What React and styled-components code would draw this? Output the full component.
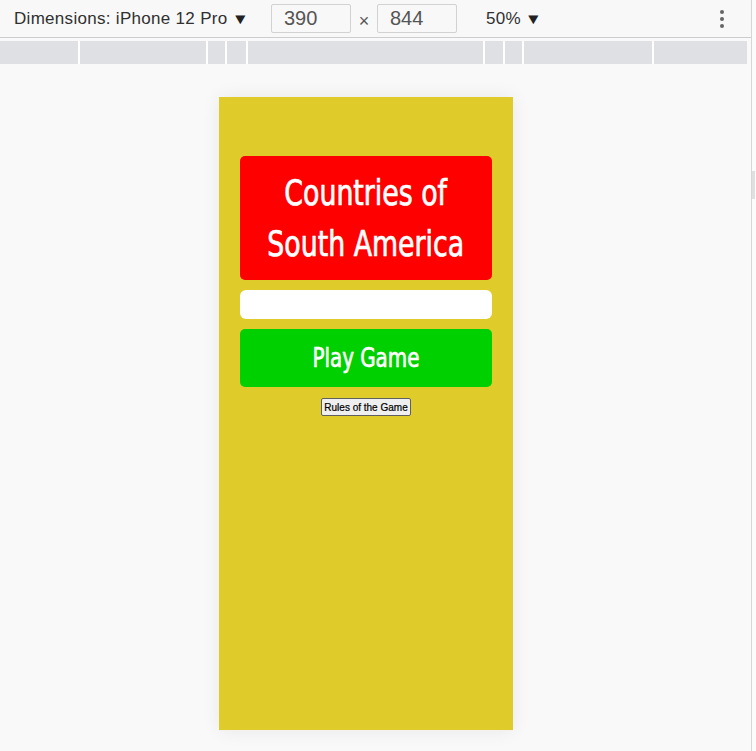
import React from 'react';
import styled, { createGlobalStyle } from 'styled-components';

const Global = createGlobalStyle`
  html, body {
    margin: 0;
    padding: 0;
    background: #f9f9f9;
    font-family: 'Liberation Sans', Arial, sans-serif;
  }
`;

const Shell = styled.div`
  display: flex;
  width: 756px;
  height: 751px;
  overflow: hidden;
`;

const Main = styled.div`
  width: 751px;
  display: flex;
  flex-direction: column;
`;

const Gutter = styled.div`
  flex: 1;
  border-left: 1px solid #d6d6d6;
  background: #fbfbfb;
  display: flex;
  flex-direction: column;
  & > span {
    margin-top: 171px;
    height: 28px;
    width: 3px;
    background: #e0e0e0;
  }
`;

const Toolbar = styled.div`
  height: 37px;
  display: flex;
  align-items: center;
  background: #f8f8f8;
  border-bottom: 1px solid #cbcdd1;
  color: #303030;
  font-size: 17px;
  padding-left: 14px;
`;

const Label = styled.span`
  display: flex;
  align-items: center;
  gap: 5px;
  letter-spacing: 0.3px;
  width: ${(p) => p.w}px;
  margin-left: ${(p) => p.ml || 0}px;
`;

const Caret = styled.span`
  font-size: 15px;
  color: #222;
  transform: scaleX(1.15);
`;

const SizeBox = styled.div`
  width: 80px;
  height: 29px;
  box-sizing: border-box;
  border: 1px solid #d2d2d2;
  border-radius: 2px;
  background: #f8f8f8;
  display: flex;
  align-items: center;
  padding-left: 12px;
  font-size: 20px;
  color: #555;
`;

const Times = styled.span`
  width: 26px;
  text-align: center;
  font-size: 18px;
  color: #555;
  padding-top: 6px;
`;

const Kebab = styled.div`
  margin-left: auto;
  margin-right: 27px;
  display: flex;
  flex-direction: column;
  gap: 3px;
  & > i {
    width: 4px;
    height: 4px;
    border-radius: 50%;
    background: #666;
  }
`;

const Ruler = styled.div`
  margin-top: 3px;
  width: 747px;
  height: 23px;
  display: flex;
  gap: 2px;
  background: #fff;
`;

const Segment = styled.div`
  width: ${(p) => p.w}px;
  flex: ${(p) => (p.last ? 1 : 'none')};
  background: #dee0e4;
`;

const Stage = styled.div`
  flex: 1;
  padding-top: 33px;
  padding-left: 219px;
`;

const Device = styled.div`
  width: 294px;
  height: 634px;
  box-sizing: border-box;
  background: #dfcc2b;
  border-bottom: 1px solid #f2f2f2;
  box-shadow: 0 0 18px rgba(0, 0, 0, 0.07);
  padding: 59px 21px 0;
  display: flex;
  flex-direction: column;
  align-items: stretch;
`;

const Title = styled.h1`
  margin: 0;
  height: 124px;
  box-sizing: border-box;
  background: #ff0000;
  border-radius: 5px;
  color: #fff;
  font-family: 'DejaVu Sans Condensed', 'DejaVu Sans', sans-serif;
  font-stretch: condensed;
  font-weight: 400;
  font-size: 35px;
  line-height: 51px;
  text-align: center;
  padding-top: 12px;
  -webkit-text-stroke: 0.7px #fff;
`;

const Squeeze = styled.span`
  display: inline-block;
  transform: scaleX(0.85);
  white-space: nowrap;
`;

const NameInput = styled.input`
  margin-top: 10px;
  height: 27px;
  border: none;
  border-radius: 6px;
  background: #fff;
  outline: none;
`;

const PlayButton = styled.button`
  margin-top: 10px;
  height: 58px;
  border: none;
  border-radius: 5px;
  background: #00d000;
  color: #fff;
  font-family: 'DejaVu Sans Condensed', 'DejaVu Sans', sans-serif;
  font-stretch: condensed;
  font-size: 26px;
  -webkit-text-stroke: 0.6px #fff;
  cursor: pointer;
`;

const RulesButton = styled.button`
  align-self: center;
  margin-top: 11px;
  height: 18px;
  padding: 0 2px;
  font-family: 'Liberation Sans', Arial, sans-serif;
  font-size: 10px;
  color: #000;
  background: #efefef;
  border: 1px solid #5f5f5f;
  border-radius: 2px;
  -webkit-text-stroke: 0.2px #000;
`;

const segments = [78, 126, 17, 19, 235, 18, 17, 128, 93];

export default function App() {
  return (
    <Shell>
      <Global />
      <Main>
        <Toolbar>
          <Label w={257}>
            Dimensions: iPhone 12 Pro <Caret>▼</Caret>
          </Label>
          <SizeBox>390</SizeBox>
          <Times>×</Times>
          <SizeBox>844</SizeBox>
          <Label w={80} ml={29}>
            50% <Caret>▼</Caret>
          </Label>
          <Kebab>
            <i />
            <i />
            <i />
          </Kebab>
        </Toolbar>
        <Ruler>
          {segments.map((w, i) => (
            <Segment key={i} w={w} last={i === segments.length - 1} />
          ))}
        </Ruler>
        <Stage>
          <Device>
            <Title>
              <Squeeze>Countries of</Squeeze>
              <br />
              <Squeeze>South America</Squeeze>
            </Title>
            <NameInput type="text" />
            <PlayButton>
              <Squeeze>Play Game</Squeeze>
            </PlayButton>
            <RulesButton>Rules of the Game</RulesButton>
          </Device>
        </Stage>
      </Main>
      <Gutter>
        <span />
      </Gutter>
    </Shell>
  );
}
